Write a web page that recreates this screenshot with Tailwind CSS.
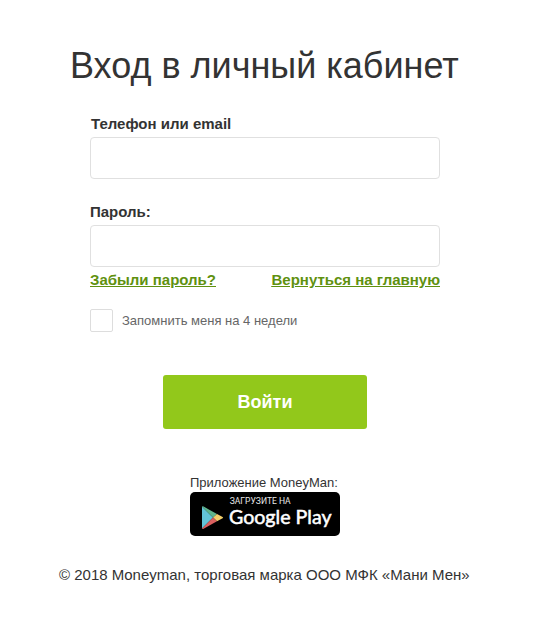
<!DOCTYPE html>
<html lang="ru"><head><meta charset="utf-8"><title>Вход</title>
<script src="https://cdn.jsdelivr.net/npm/@tailwindcss/browser@4"></script></head>
<body class="bg-white font-['Liberation_Sans',sans-serif] text-[#333]">
<main class="flex h-[626px] w-[536px] flex-col items-start overflow-hidden">
<h1 class="mt-[44px] ml-[70px] text-[36px] leading-[44px] whitespace-nowrap">Вход в личный кабинет</h1>
<form class="ml-[90px] flex w-[350px] flex-col">
<label class="mt-[27px] ml-px h-[22px] text-[15px] leading-[18px] font-bold">Телефон или email</label>
<input class="h-[42px] rounded-[4px] border border-[#e0e0e0]">
<label class="mt-[24px] h-[22px] text-[15px] leading-[18px] font-bold">Пароль:</label>
<input type="password" class="h-[42px] rounded-[4px] border border-[#e0e0e0]">
<div class="mt-[4px] flex justify-between text-[15px] leading-[18px] font-bold whitespace-nowrap text-[#5f910f] underline"><a>Забыли пароль?</a><a>Вернуться на главную</a></div>
<label class="mt-[20px] flex h-[23px] items-center gap-[9px] text-[13px] text-[#666]"><span class="size-[23px] rounded-[2px] border border-[#ddd]"></span>Запомнить меня на 4 недели</label>
<button type="button" class="mt-[43px] ml-[73px] h-[54px] w-[204px] rounded-[3px] bg-[#92c81b] text-[18px] font-bold text-white">Войти</button>
</form>
<div class="mt-[45px] ml-[190px] text-[13px] leading-[18px] whitespace-nowrap">Приложение MoneyMan:</div>
<svg class="ml-[190px] block h-[44px] w-[150px]" viewBox="0 0 150 44">
<rect width="150" height="44" rx="5"/>
<path d="M12 14.6v22L23 25.6Z" fill="#62c4d8"/>
<path d="M12 14.6Q12.6 14 13.6 14.6L27 22l-4 3.6Z" fill="#5fb58c"/>
<path d="M27 22l5.6 3q1 .6 0 1.2L27 29.3 23 25.6Z" fill="#f3cf6b"/>
<path d="M12 36.6Q12.6 37.2 13.6 36.7L27 29.3 23 25.6Z" fill="#d9605f"/>
<text x="39.7" y="12.2" fill="#e8e8e8" font-size="8.2" textLength="61" lengthAdjust="spacingAndGlyphs" class="font-['Roboto',sans-serif]">ЗАГРУЗИТЕ НА</text>
<text x="39" y="32.2" fill="#fff" font-size="18.6" textLength="102.5" lengthAdjust="spacingAndGlyphs" stroke="#fff" stroke-width=".5" class="font-['Lato',sans-serif]">Google Play</text>
</svg>
<footer class="mt-[30px] ml-[59px] text-[15px] leading-[18px] whitespace-nowrap">© 2018 Moneyman, торговая марка ООО МФК «Мани Мен»</footer>
</main></body></html>
